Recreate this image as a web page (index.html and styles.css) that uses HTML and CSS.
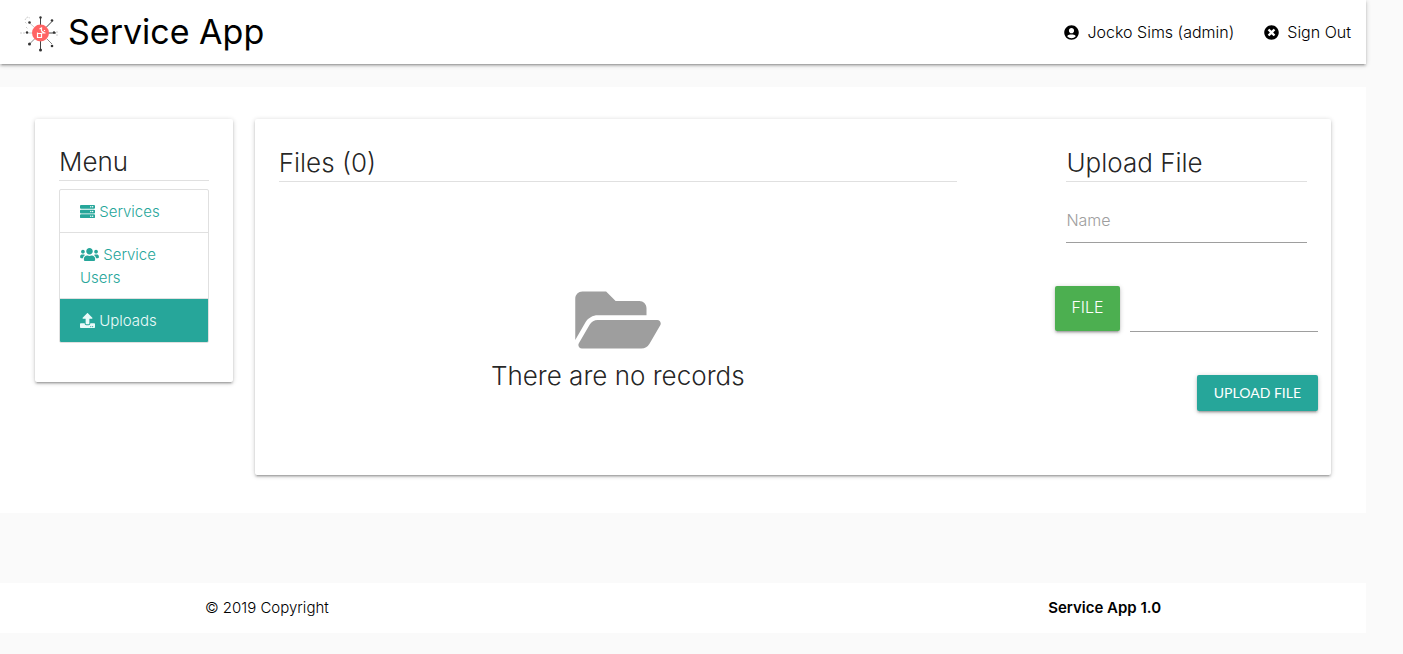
FILE: index.html
```html
<!DOCTYPE html>
<html lang="en">
<head>
<meta charset="utf-8">
<title>Service App</title>
<meta name="viewport" content="width=device-width, initial-scale=1">
<link rel="stylesheet" href="styles.css">
</head>
<body>
<header class="navbar">
  <a class="brand" href="#">
    <svg class="brand-logo" viewBox="0 0 40 40" aria-hidden="true">
      <g stroke="#444" stroke-width="1" fill="none">
        <path d="M20.500 13V5M20.500 29v9M26 15.500l6-6M28 21h8"/>
        <path d="M27 27l5 5M15 26.500l-6 6" stroke="#888"/>
        <path d="M12 21H7M14 15l-5-4.500" stroke="#ccc"/>
      </g>
      <g fill="#333">
        <circle cx="20.500" cy="5.500" r="1.200"/><circle cx="20.500" cy="38" r="1.500"/>
        <circle cx="32" cy="8.500" r="1.300"/><circle cx="32" cy="34" r="1.300"/>
        <circle cx="9.500" cy="32" r="1.500"/><circle cx="7" cy="20.500" r="1.200"/>
        <circle cx="34" cy="20.500" r="1.200"/><circle cx="9.500" cy="10.500" r="1.300"/>
      </g>
      <path d="M0 21h5M36 20h3M5 8l2-3 3 1M5 10l2 2M36 23h2M6 15l2 2" fill="none" stroke="#ccc" stroke-dasharray="2 1"/>
      <circle cx="20.500" cy="21" r="8.500" fill="#ff6464"/>
      <path d="M17.500 20.500v5h4v-4h-4M19.500 17l2-1v3l3 2M24.500 18v1M21.500 21h4" fill="none" stroke="#fff" stroke-width="1.200"/>
    </svg>
    <span>Service App</span>
  </a>
  <nav class="account">
    <a href="#"><svg class="icon" viewBox="0 0 496 512" aria-hidden="true"><path d="M248 8C111 8 0 119 0 256s111 248 248 248 248-111 248-248S385 8 248 8zm0 96c48.600 0 88 39.400 88 88s-39.400 88-88 88-88-39.400-88-88 39.400-88 88-88zm0 344c-58.700 0-111.300-26.600-146.500-68.200 18.800-35.400 55.600-59.800 98.500-59.800 2.400 0 4.800.4 7.100 1.100 13 4.200 26.600 6.900 40.900 6.900 14.300 0 28-2.700 40.900-6.900 2.300-.7 4.700-1.100 7.100-1.100 42.900 0 79.700 24.400 98.500 59.800C359.300 421.400 306.700 448 248 448z"/></svg>Jocko Sims (admin)</a>
    <a href="#"><svg class="icon" viewBox="0 0 512 512" aria-hidden="true"><path d="M256 8C119 8 8 119 8 256s111 248 248 248 248-111 248-248S393 8 256 8zm121.600 313.100c4.700 4.700 4.700 12.300 0 17L338 377.600c-4.700 4.700-12.300 4.700-17 0L256 312l-65.100 65.600c-4.700 4.700-12.300 4.700-17 0L134.400 338c-4.700-4.700-4.700-12.300 0-17l65.600-65-65.600-65.100c-4.700-4.700-4.700-12.300 0-17l39.600-39.600c4.700-4.700 12.300-4.700 17 0l65 65.700 65.100-65.600c4.700-4.700 12.300-4.700 17 0l39.600 39.600c4.700 4.700 4.700 12.300 0 17L312 256l65.600 65.100z"/></svg>Sign Out</a>
  </nav>
</header>

<main class="content">
  <aside class="card menu">
    <h2 class="heading">Menu</h2>
    <nav class="menu-list">
      <a href="#"><svg class="icon" viewBox="0 0 512 512" aria-hidden="true"><path fill-rule="evenodd" d="M32 32h448a32 32 0 0 1 32 32v64a32 32 0 0 1-32 32H32a32 32 0 0 1-32-32V64a32 32 0 0 1 32-32zM344 96a24 24 0 1 0 48 0a24 24 0 1 0-48 0zM408 96a24 24 0 1 0 48 0a24 24 0 1 0-48 0zM32 192h448a32 32 0 0 1 32 32v64a32 32 0 0 1-32 32H32a32 32 0 0 1-32-32v-64a32 32 0 0 1 32-32zM344 256a24 24 0 1 0 48 0a24 24 0 1 0-48 0zM408 256a24 24 0 1 0 48 0a24 24 0 1 0-48 0zM32 352h448a32 32 0 0 1 32 32v64a32 32 0 0 1-32 32H32a32 32 0 0 1-32-32v-64a32 32 0 0 1 32-32zM344 416a24 24 0 1 0 48 0a24 24 0 1 0-48 0zM408 416a24 24 0 1 0 48 0a24 24 0 1 0-48 0z"/></svg> Services</a>
      <a href="#"><svg class="icon icon-wide" viewBox="0 0 640 512" aria-hidden="true"><path d="M96 224c35.300 0 64-28.700 64-64s-28.700-64-64-64-64 28.700-64 64 28.700 64 64 64zm448 0c35.300 0 64-28.700 64-64s-28.700-64-64-64-64 28.700-64 64 28.700 64 64 64zm32 32h-64c-17.600 0-33.500 7.100-45.100 18.600 40.300 22.100 68.900 62 75.100 109.400h66c17.700 0 32-14.300 32-32v-32c0-35.300-28.700-64-64-64zm-256 0c61.900 0 112-50.100 112-112S381.900 32 320 32 208 82.100 208 144s50.100 112 112 112zm76.800 32h-8.300c-20.800 10-43.900 16-68.500 16s-47.600-6-68.500-16h-8.300C179.600 288 128 339.600 128 403.200V432c0 26.500 21.500 48 48 48h288c26.500 0 48-21.500 48-48v-28.800c0-63.600-51.600-115.200-115.200-115.200zm-223.700-13.400C161.500 263.100 145.600 256 128 256H64c-35.300 0-64 28.700-64 64v32c0 17.700 14.300 32 32 32h65.900c6.300-47.400 34.900-87.300 75.200-109.400z"/></svg> Service Users</a>
      <a class="active" href="#" aria-current="page"><svg class="icon" viewBox="0 0 512 512" aria-hidden="true"><path d="M296 384h-80c-13.300 0-24-10.700-24-24V192h-87.700c-17.800 0-26.700-21.500-14.100-34.100L242.300 5.700c7.500-7.500 19.800-7.500 27.300 0l152.200 152.200c12.600 12.600 3.700 34.100-14.100 34.100H320v168c0 13.300-10.700 24-24 24zm216-8v112c0 13.300-10.700 24-24 24H24c-13.300 0-24-10.700-24-24V376c0-13.300 10.700-24 24-24h136v8c0 30.900 25.100 56 56 56h80c30.900 0 56-25.100 56-56v-8h136c13.300 0 24 10.700 24 24zm-124 88c0-11-9-20-20-20s-20 9-20 20 9 20 20 20 20-9 20-20zm64 0c0-11-9-20-20-20s-20 9-20 20 9 20 20 20 20-9 20-20z"/></svg> Uploads</a>
    </nav>
  </aside>

  <div class="card panel">
    <section class="files">
      <h2 class="heading">Files (0)</h2>
      <div class="empty">
        <svg class="folder" viewBox="0 0 576 512" aria-hidden="true"><path d="M572.694 292.093L500.270 416.248A63.997 63.997 0 0 1 444.989 448H45.025c-18.523 0-30.064-20.093-20.731-36.093l72.424-124.155A64 64 0 0 1 152 256h399.964c18.523 0 30.064 20.093 20.730 36.093zM152 224h328v-48c0-26.510-21.490-48-48-48H272l-64-64H48C21.490 64 0 85.490 0 112v278.046l69.077-118.418C86.214 242.250 117.989 224 152 224z"/></svg>
        <p>There are no records</p>
      </div>
    </section>
    <section class="upload">
      <h2 class="heading">Upload File</h2>
      <form>
        <input class="field" type="text" placeholder="Name" aria-label="Name">
        <div class="file-row">
          <button class="btn btn-file" type="button">FILE</button>
          <input class="field" type="text" aria-label="Selected file">
        </div>
        <div class="actions">
          <button class="btn btn-submit" type="submit">UPLOAD FILE</button>
        </div>
      </form>
    </section>
  </div>
</main>

<footer class="footer">
  <span>© 2019 Copyright</span>
  <strong>Service App 1.0</strong>
</footer>
</body>
</html>
```

FILE: styles.css
```css
* { box-sizing: border-box; }

body {
  margin: 0;
  padding-right: 37px;
  background: #fafafa;
  color: rgba(0, 0, 0, 0.87);
  font: 300 15px/23px Inter, "Open Sans", sans-serif;
}

a { color: inherit; text-decoration: none; }

.icon {
  width: 15px;
  height: 15px;
  fill: currentColor;
  vertical-align: -2px;
}

.icon-wide { width: 19px; }

.navbar {
  display: flex;
  align-items: center;
  justify-content: space-between;
  height: 64px;
  padding: 0 15px 0 20px;
  background: #fff;
  color: #000;
  box-shadow: 0 2px 2px 0 rgba(0, 0, 0, 0.14), 0 3px 1px -2px rgba(0, 0, 0, 0.12), 0 1px 5px 0 rgba(0, 0, 0, 0.2);
}

.brand {
  display: flex;
  align-items: center;
  gap: 8px;
  font-size: 34px;
  line-height: 64px;
  font-weight: 400;
}

.brand-logo { width: 40px; height: 40px; }

.account { display: flex; gap: 30px; font-size: 16px; }

.account a { display: flex; align-items: center; gap: 8px; }

.content {
  display: grid;
  grid-template-columns: repeat(12, minmax(0, 1fr));
  column-gap: 22px;
  align-items: start;
  margin-top: 23px;
  padding: 32px 35px 38px;
  background: #fff;
}

.card {
  padding: 24px;
  border-radius: 2px;
  background: #fff;
  box-shadow: 0 2px 2px 0 rgba(0, 0, 0, 0.14), 0 3px 1px -2px rgba(0, 0, 0, 0.12), 0 1px 5px 0 rgba(0, 0, 0, 0.2);
}

.menu { grid-column: span 2; padding: 23px 24px 39px; }

.heading {
  margin: 4px 0 8px;
  padding-bottom: 2px;
  border-bottom: 1px solid #e0e0e0;
  font-size: 26px;
  line-height: 32px;
  font-weight: 300;
}

.menu-list {
  overflow: hidden;
  border: 1px solid #e0e0e0;
  border-radius: 2px;
}

.menu-list a {
  display: block;
  padding: 10px 20px 9px;
  border-bottom: 1px solid #e0e0e0;
  color: #26a69a;
}

.menu-list a:last-child { padding-bottom: 10px; border-bottom: 0; }

.menu-list .active { background: #26a69a; color: #eafaf9; }

.panel {
  grid-column: span 10;
  display: grid;
  grid-template-columns: repeat(12, minmax(0, 1fr));
  column-gap: 22px;
  padding-bottom: 64px;
}

.files { grid-column: 1 / span 8; }

.upload { grid-column: 10 / span 3; }

.empty {
  display: flex;
  flex-direction: column;
  align-items: center;
  padding-top: 92px;
}

.folder { width: 86px; height: 76px; fill: #9e9e9e; }

.empty p {
  margin: 2px 0 0;
  font-size: 26px;
  line-height: 32px;
}

.field {
  display: block;
  width: 100%;
  height: 46px;
  padding: 0;
  border: 0;
  border-bottom: 1px solid #9e9e9e;
  background: transparent;
  font: inherit;
  font-size: 16px;
  outline: 0;
}

.field::placeholder { color: #9e9e9e; opacity: 1; }

.upload form { padding-top: 7px; }

.file-row {
  display: flex;
  gap: 10px;
  margin: 43px -11px 0;
}

.file-row .field { flex: 1; min-width: 0; }

.btn {
  border: 0;
  border-radius: 2px;
  padding: 0 16px;
  color: #fff;
  box-shadow: 0 2px 2px 0 rgba(0, 0, 0, 0.14), 0 3px 1px -2px rgba(0, 0, 0, 0.12), 0 1px 5px 0 rgba(0, 0, 0, 0.2);
  cursor: pointer;
}

.btn-file {
  height: 45px;
  padding-bottom: 2px;
  background: #4caf50;
  font: inherit;
  font-size: 16px;
}

.actions {
  display: flex;
  justify-content: flex-end;
  margin: 43px -11px 0;
}

.btn-submit {
  height: 36px;
  padding: 0 17px;
  background: #26a69a;
  font: 400 14px/36px Lato, "Open Sans", sans-serif;
}

.footer {
  display: grid;
  grid-template-columns: 15% 1fr 15%;
  margin-top: 70px;
  padding: 13px 0 14px;
  background: #fff;
  color: #000;
}

.footer span { grid-column: 2; grid-row: 1; }

.footer strong { grid-column: 2; grid-row: 1; justify-self: end; font-weight: 600; }
```
